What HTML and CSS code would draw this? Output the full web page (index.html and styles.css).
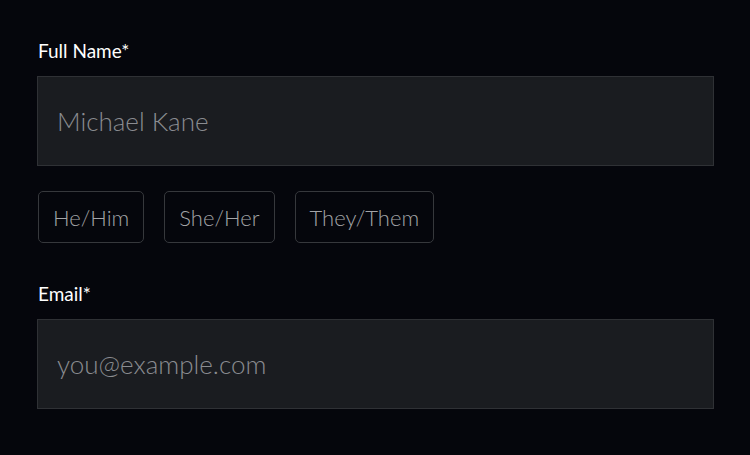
FILE: index.html
```html
<!DOCTYPE html>
<html lang="en">
  <head>
    <meta charset="UTF-8" />
    <meta name="viewport" content="width=device-width, initial-scale=1.0" />
    <title>Profile</title>
    <link rel="stylesheet" href="styles.css">
  </head>
  <body>
    <form class="profile-form">
      <div class="field">
        <label for="fullName">Full Name*</label>
        <input type="text" id="fullName" name="fullName" placeholder="Michael Kane" />
      </div>
      <div class="pronouns">
        <button type="button" class="pill">He/Him</button>
        <button type="button" class="pill">She/Her</button>
        <button type="button" class="pill">They/Them</button>
      </div>
      <div class="field">
        <label for="email">Email*</label>
        <input type="email" id="email" name="email" placeholder="you@example.com" />
      </div>
    </form>
  </body>
</html>
```

FILE: styles.css
```css
body {
  margin: 0;
  background-color: #05060c;
  font-family: "Lato", "Noto Sans", sans-serif;
  color: #fff;
}

.profile-form {
  display: flex;
  flex-direction: column;
  padding: 37px 36px 0 37px;
}

.field {
  display: flex;
  flex-direction: column;
}

.field label {
  font-size: 19px;
  line-height: 28px;
  margin-bottom: 11px;
  margin-left: 1px;
}

.field input {
  height: 90px;
  padding: 0 19px;
  border: 1px solid #2f3135;
  background-color: #1a1c20;
  color: #ddd;
  font-family: inherit;
  font-size: 26px;
  font-weight: 300;
  box-sizing: border-box;
  outline: none;
}

.field input::placeholder {
  color: #8a8c90;
}

.pronouns {
  display: flex;
  gap: 20px;
  margin: 25px 0 37px 1px;
}

.pill {
  height: 52px;
  padding: 0 14px;
  border: 1px solid #36383c;
  border-radius: 5px;
  background: transparent;
  color: #a3a4a7;
  font-family: inherit;
  font-size: 22px;
  font-weight: 300;
  cursor: pointer;
}
```
